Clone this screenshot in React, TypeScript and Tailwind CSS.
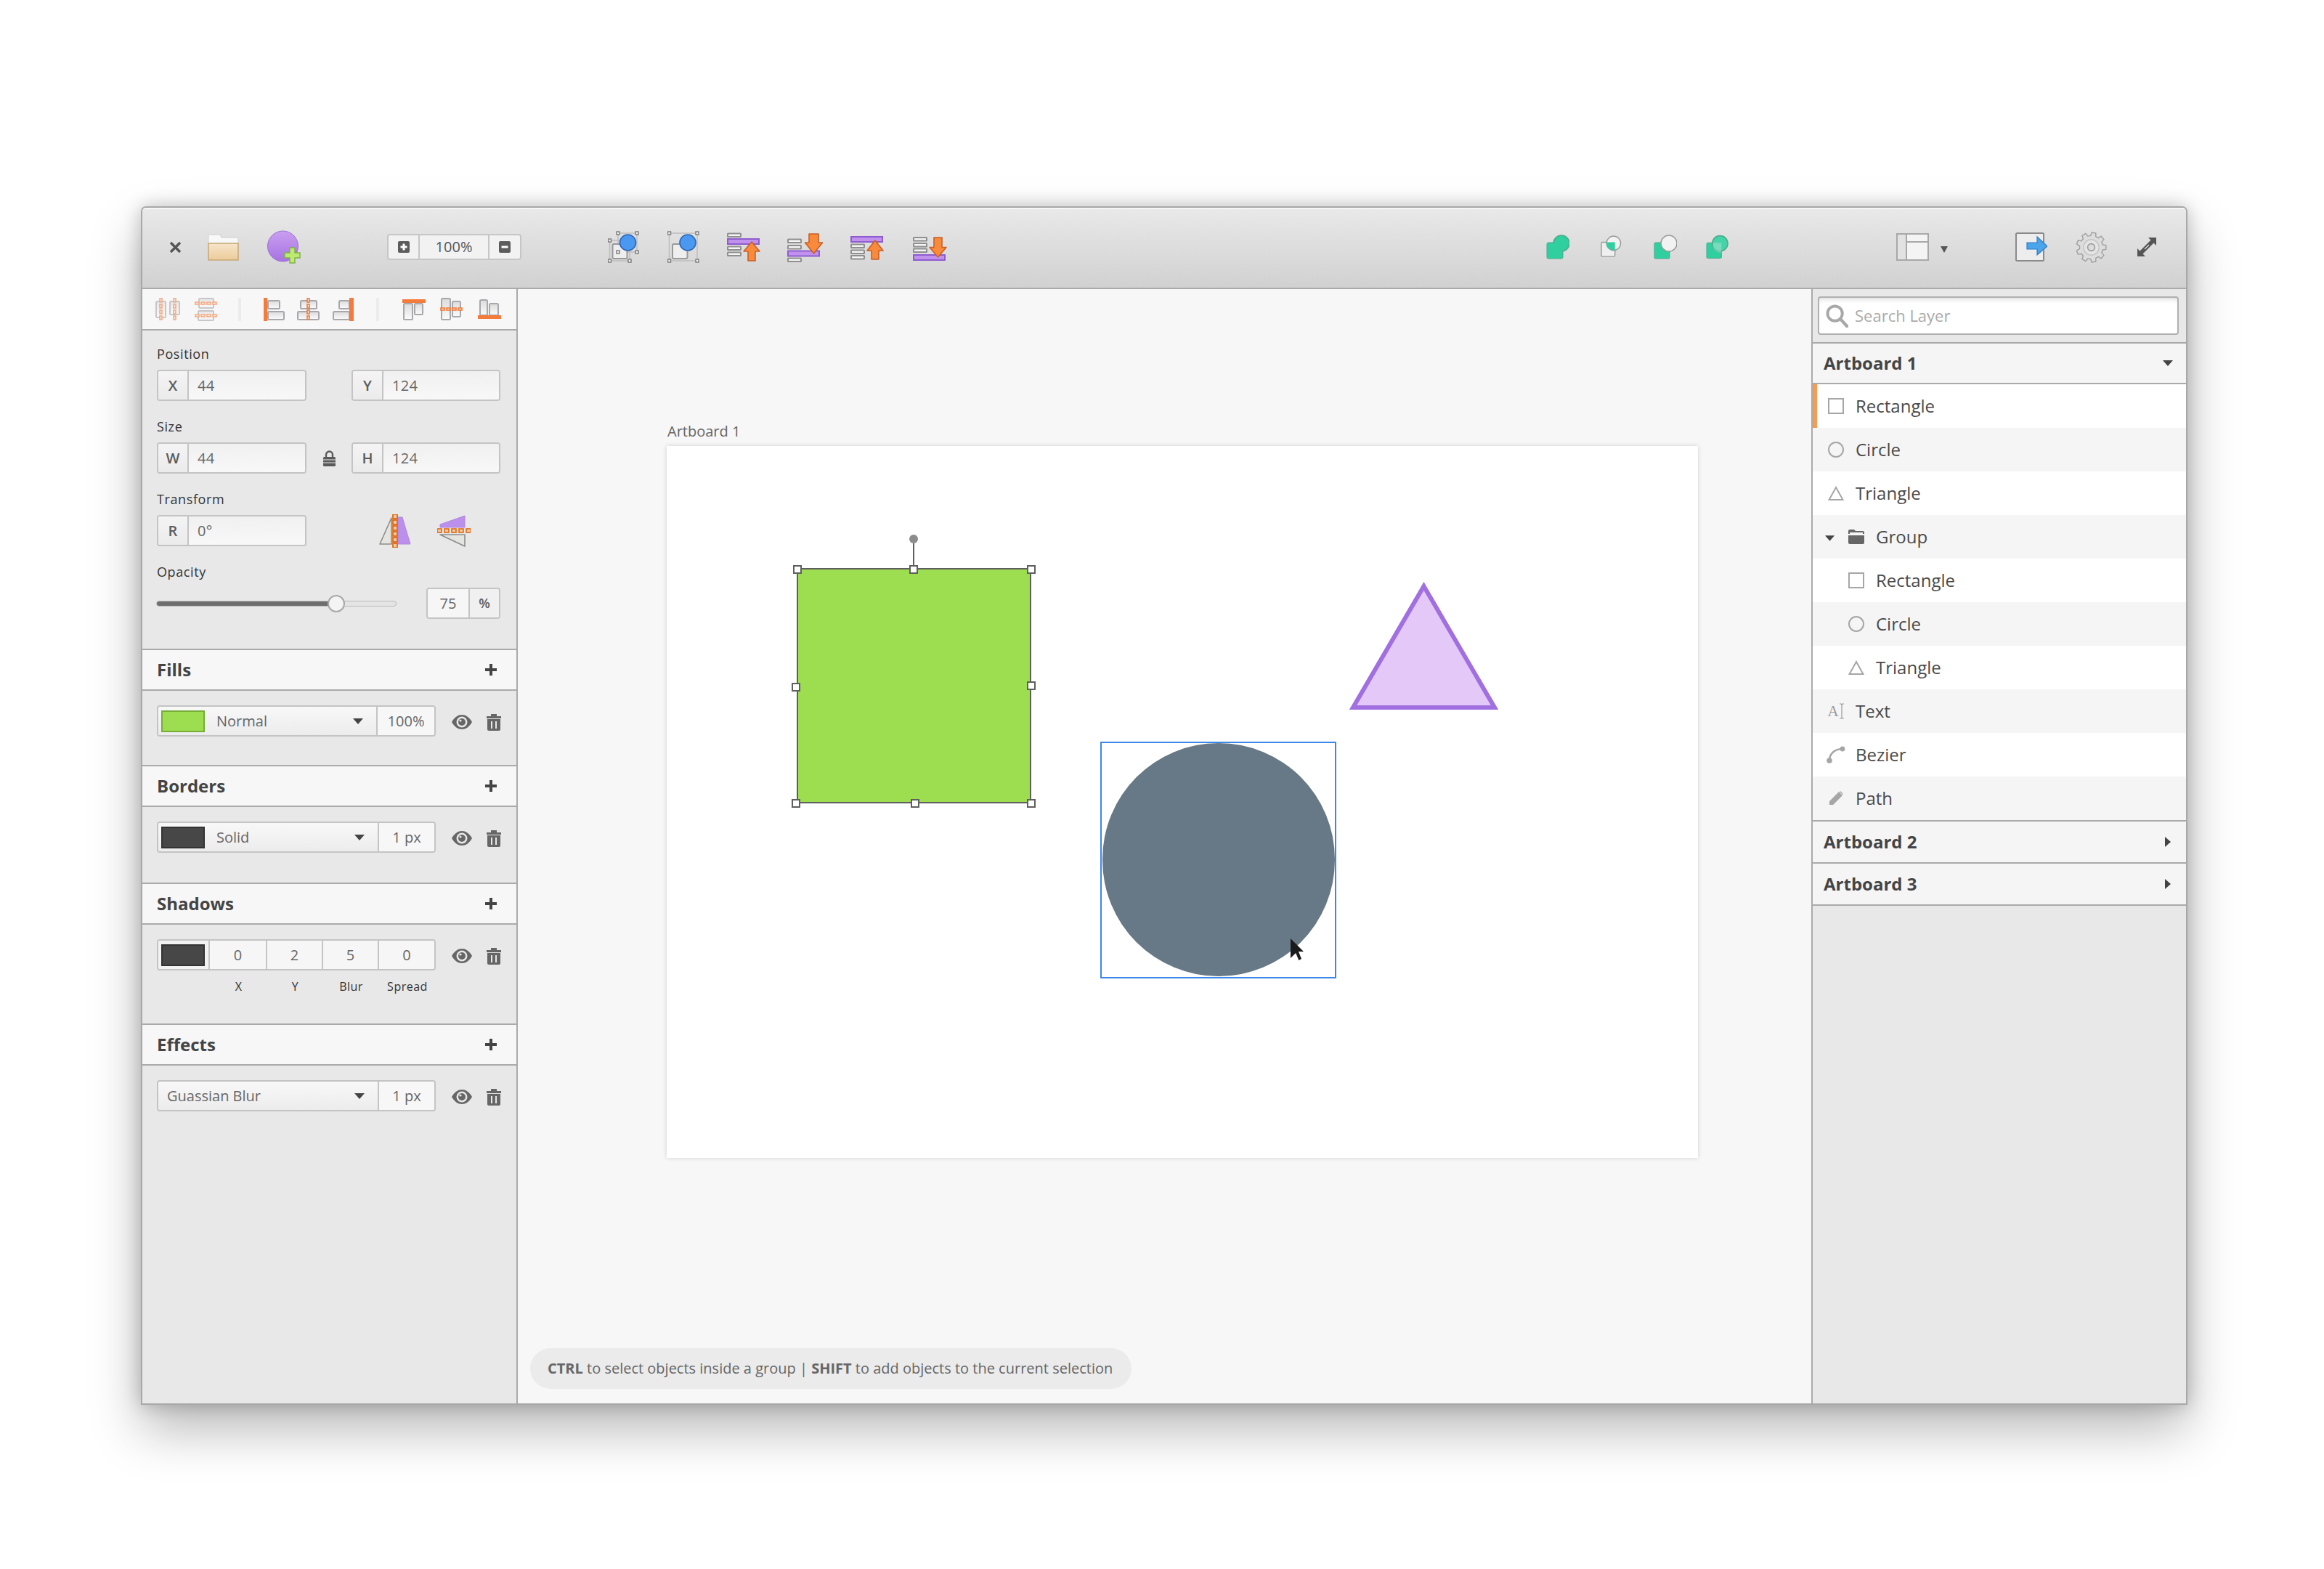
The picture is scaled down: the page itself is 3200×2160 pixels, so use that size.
import type { ReactNode } from "react"

const line = "border-[#aaaaaa]"

function Plus() {
  return (
    <svg viewBox="0 0 16 16" className="w-[16px] h-[16px]">
      <path d="M6 0h4v6h6v4h-6v6H6v-6H0V6h6z" fill="#444444" />
    </svg>
  )
}

function Caret({ className = "" }: { className?: string }) {
  return (
    <svg viewBox="0 0 14 8" className={`w-[14px] h-[8px] shrink-0 ${className}`}>
      <path d="M0 0h14L7 8z" fill="#444444" />
    </svg>
  )
}

function Eye() {
  return (
    <svg viewBox="0 0 28 20" className="w-[28px] h-[20px] shrink-0">
      <path d="M0 10C4 3 9 0 14 0s10 3 14 10c-4 7-9 10-14 10S4 17 0 10z" fill="#666666" />
      <circle cx="14" cy="10" r="7.5" fill="#e8e8e8" />
      <circle cx="14" cy="10" r="5" fill="#666666" />
      <circle cx="12" cy="8" r="1.6" fill="#e8e8e8" />
    </svg>
  )
}

function Trash() {
  return (
    <svg viewBox="0 0 20 23" className="w-[20px] h-[23px] shrink-0">
      <path d="M0 3h6V0h8v3h6v3H0z" fill="#666666" />
      <path d="M1 7h18v14a2 2 0 0 1-2 2H3a2 2 0 0 1-2-2z" fill="#666666" />
      <path d="M6 10h2v10H6zM12 10h2v10h-2z" fill="#e8e8e8" />
    </svg>
  )
}

function RowActions() {
  return (
    <div className="flex items-center ml-[22px] mt-[3px] gap-[20px]">
      <Eye />
      <Trash />
    </div>
  )
}

function Field({ label, value, w }: { label: string; value: string; w: string }) {
  return (
    <div className={`flex h-[43px] rounded-[4px] border-2 border-[#c4c4c4] overflow-hidden ${w}`}>
      <div className="w-[42px] flex items-center justify-center border-r-2 border-[#c4c4c4] bg-gradient-to-b from-[#f4f4f4] to-[#ebebeb] text-[20px] font-semibold text-[#5c5c5c]">
        {label}
      </div>
      <div className="flex-1 flex items-center pl-[12px] bg-gradient-to-b from-[#f0f0f0] to-[#f8f8f8] text-[20px] tracking-[0.3px] text-[#666666]">
        {value}
      </div>
    </div>
  )
}

function Label({ children, className = "" }: { children: ReactNode; className?: string }) {
  return <div className={`h-[24px] leading-[24px] text-[18px] tracking-[0.6px] text-[#333333] ${className}`}>{children}</div>
}

function SectionHead({ title }: { title: string }) {
  return (
    <div className={`h-[58px] flex items-center justify-between bg-[#f7f7f7] border-y-2 ${line} pl-[20px] pr-[27px]`}>
      <span className="text-[24px] font-bold text-[#444444]">{title}</span>
      <Plus />
    </div>
  )
}

function Swatch({ className }: { className: string }) {
  return <div className={`w-[60px] h-[30px] border-2 ${className}`} />
}

function Dropdown({ swatch, text, value, split }: { swatch?: string; text: string; value: string; split: string }) {
  return (
    <div className="flex h-[43px] w-[384px] rounded-[4px] border-2 border-[#c4c4c4] overflow-hidden">
      <div className={`flex items-center bg-gradient-to-b from-[#f8f8f8] to-[#ececec] border-r-2 border-[#c4c4c4] pr-[18px] ${split}`}>
        {swatch ? <div className="ml-[4px]"><Swatch className={swatch} /></div> : null}
        <span className={`text-[20px] text-[#666666] flex-1 ${swatch ? "ml-[16px]" : "ml-[12px]"}`}>{text}</span>
        <Caret />
      </div>
      <div className="flex-1 flex items-center justify-center bg-[#f7f7f7] text-[20px] text-[#666666]">{value}</div>
    </div>
  )
}

function Dashes({ x, y, vertical, count = 4 }: { x: number; y: number; vertical?: boolean; count?: number }) {
  const steps = Array.from({ length: count }, (_, i) => i * 8)
  return (
    <>
      {steps.map((p) =>
        vertical ? (
          <rect key={p} x={x + 1} y={y + p + 1} width={3} height={5} fill="#e6e6e6" stroke="#f47b3a" strokeWidth="1.6" />
        ) : (
          <rect key={p} x={x + p + 1} y={y + 1} width={5} height={3} fill="#e6e6e6" stroke="#f47b3a" strokeWidth="1.6" />
        ),
      )}
    </>
  )
}

function AlignIcon({
  className,
  rects,
  bar,
  dashed,
  vertical,
}: {
  className: string
  rects: number[][]
  bar: number[]
  dashed?: boolean
  vertical?: boolean
}) {
  return (
    <svg viewBox="0 0 32 32" className={`h-[32px] w-[32px] shrink-0 ${className}`}>
      {rects.map((r, i) => (
        <rect key={i} x={r[0] + 1} y={r[1] + 1} width={r[2] - 2} height={r[3] - 2} rx="1.5" fill="url(#toolRect)" stroke="#a8a8ac" strokeWidth="2" />
      ))}
      {dashed ? (
        <Dashes x={bar[0]} y={bar[1]} vertical={vertical} />
      ) : (
        <rect x={bar[0]} y={bar[1]} width={bar[2]} height={bar[3]} fill="#f47b3a" />
      )}
    </svg>
  )
}

function OrderIcon({
  className,
  bars,
  accent,
  arrow,
}: {
  className: string
  bars: number[]
  accent: number
  arrow: string
}) {
  return (
    <svg viewBox="0 0 49 41" className={`w-[49px] h-[41px] shrink-0 ${className}`}>
      {bars.map((y) => (
        <rect key={y} x="1" y={y} width="18" height="4.5" rx="0.5" fill="#f4f4f4" stroke="#8f8f8f" strokeWidth="2" />
      ))}
      <rect x="1" y={accent} width="43" height="7" fill="#c092ee" stroke="#8f5cd0" strokeWidth="2" />
      <path d={arrow} fill="#f98a3c" stroke="#c95f27" strokeWidth="1.6" strokeLinejoin="round" />
    </svg>
  )
}

function Ellipse({ fill, stroke = "none", cx = 21 }: { fill: string; stroke?: string; cx?: number }) {
  return <circle cx={cx} cy="12" r="11" fill={fill} stroke={stroke} strokeWidth="1.5" />
}

function gearPath(cx: number, cy: number, outer: number, inner: number, teeth: number) {
  const pts: string[] = []
  for (let i = 0; i < teeth; i++) {
    const a = (i / teeth) * Math.PI * 2
    const s = (Math.PI * 2) / teeth
    const at = (r: number, t: number) => `${(cx + r * Math.cos(t)).toFixed(2)} ${(cy + r * Math.sin(t)).toFixed(2)}`
    pts.push(at(inner, a - s * 0.32), at(outer, a - s * 0.2), at(outer, a + s * 0.2), at(inner, a + s * 0.32))
  }
  return `M${pts.join("L")}Z`
}

function Toolbar() {
  return (
    <div className={`h-[112px] flex items-center pb-[2px] shrink-0 border-b-2 ${line} bg-gradient-to-b from-[#e9e9e9] to-[#d1d1d1] shadow-[inset_0_2px_0_#f6f6f6]`}>
      <svg viewBox="0 0 17 17" className="ml-[37px] w-[17px] h-[17px] shrink-0">
        <path d="M2 2l13 13M15 2L2 15" stroke="#555555" strokeWidth="3.4" />
      </svg>
      <svg viewBox="0 0 43 37" className="ml-[36px] w-[43px] h-[37px] shrink-0">
        <defs>
          <linearGradient id="folderBody" x1="0" y1="0" x2="0" y2="1">
            <stop offset="0" stopColor="#f6e5cb" />
            <stop offset="1" stopColor="#eccb99" />
          </linearGradient>
          <linearGradient id="purple" x1="0" y1="0" x2="0" y2="1">
            <stop offset="0" stopColor="#ca9ff0" />
            <stop offset="1" stopColor="#a672e2" />
          </linearGradient>
          <linearGradient id="toolRect" x1="0" y1="0" x2="0" y2="1">
            <stop offset="0" stopColor="#dcdcdc" />
            <stop offset="1" stopColor="#fbfbfb" />
          </linearGradient>
        </defs>
        <path d="M1 5V2a1 1 0 0 1 1-1h15l2 4h22a1 1 0 0 1 1 1v8H1z" fill="#f8f8f8" stroke="#cfcfcf" />
        <rect x="1" y="13" width="41" height="23" fill="url(#folderBody)" stroke="#c9ab7c" strokeWidth="1.6" />
      </svg>
      <svg viewBox="0 0 46 46" className="ml-[39px] w-[46px] h-[46px] shrink-0">
        <circle cx="21.5" cy="22" r="21" fill="url(#purple)" stroke="#9a70d4" strokeWidth="1" />
        <path d="M31 24h7v7h7v7h-7v7h-7v-7h-7v-7h7z" fill="#bdeb6f" stroke="#7eb04e" strokeWidth="1.4" />
      </svg>
      <div className="ml-[119px] flex h-[36px] w-[185px] shrink-0 rounded-[4px] border-2 border-[#c6c6c6] bg-[#f2f2f2] overflow-hidden">
        <div className="w-[43px] flex items-center justify-center border-r-2 border-[#c6c6c6]">
          <svg viewBox="0 0 16 16" className="w-[16px] h-[16px]">
            <rect width="16" height="16" rx="2" fill="#5c5c5c" />
            <path d="M6.5 3.5h3v3h3v3h-3v3h-3v-3h-3v-3h3z" fill="#ffffff" />
          </svg>
        </div>
        <div className="flex-1 flex items-center justify-center text-[20px] text-[#555555]">100%</div>
        <div className="w-[44px] flex items-center justify-center border-l-2 border-[#c6c6c6]">
          <svg viewBox="0 0 16 16" className="w-[16px] h-[16px]">
            <rect width="16" height="16" rx="2" fill="#5c5c5c" />
            <path d="M3.5 6.5h9v3h-9z" fill="#ffffff" />
          </svg>
        </div>
      </div>

      <svg viewBox="0 0 44 44" className="ml-[119px] w-[44px] h-[44px] shrink-0">
        <rect x="2.5" y="13" width="27.5" height="28" fill="none" stroke="#bdbdbd" strokeWidth="1.5" />
        <rect x="14" y="3" width="26" height="26" fill="none" stroke="#bdbdbd" strokeWidth="1.5" />
        <rect x="6.5" y="18" width="20" height="20" rx="2" fill="#eeeeee" stroke="#999999" strokeWidth="2" />
        {[[14, 3], [40, 3], [2.5, 13], [14, 29], [40, 29], [2.5, 41], [30, 41]].map(([x, y]) => (
          <rect key={`${x}-${y}`} x={x - 2} y={y - 2} width="4" height="4" fill="#f4f4f4" stroke="#808080" strokeWidth="1.5" />
        ))}
        <circle cx="27.5" cy="16" r="11" fill="#4a98ef" stroke="#2d67b8" strokeWidth="1.6" />
      </svg>
      <svg viewBox="0 0 44 44" className="ml-[38px] w-[44px] h-[44px] shrink-0">
        <rect x="2.5" y="3" width="38.5" height="38" fill="none" stroke="#bdbdbd" strokeWidth="1.5" />
        <rect x="7" y="18" width="20.5" height="20" rx="2" fill="#eeeeee" stroke="#999999" strokeWidth="2" />
        {[[2.5, 3], [41, 3], [2.5, 41], [41, 41]].map(([x, y]) => (
          <rect key={`${x}-${y}`} x={x - 2} y={y - 2} width="4" height="4" fill="#f4f4f4" stroke="#808080" strokeWidth="1.5" />
        ))}
        <circle cx="28" cy="16" r="11" fill="#4a98ef" stroke="#2d67b8" strokeWidth="1.6" />
      </svg>
      <OrderIcon className="ml-[38px]" bars={[1.5, 19.5, 27.5]} accent={9} arrow="M34 13l11 13h-6v13H29V26h-6z" />
      <OrderIcon className="ml-[34px]" bars={[9.5, 18, 35.5]} accent={25.5} arrow="M30 2h13v12h5.5L36.5 29 24.5 14H30z" />
      <OrderIcon className="ml-[38px]" bars={[16.5, 24.5, 32]} accent={6} arrow="M34 11l11 14h-6v12H29V25h-6z" />
      <OrderIcon className="ml-[37px]" bars={[7, 15, 22.5]} accent={31} arrow="M29 7h11v13.5h6L34.5 34 23 20.5h6z" />

      <svg viewBox="0 0 32 34" className="ml-[823px] w-[32px] h-[34px] shrink-0">
        <rect x="1" y="11" width="22" height="22" rx="2" fill="#2fcf9f" stroke="#4ca98a" />
        <Ellipse fill="#2fcf9f" stroke="#4ca98a" />
        <rect x="2" y="12" width="20" height="20" rx="2" fill="#2fcf9f" />
      </svg>
      <svg viewBox="0 0 32 34" className="ml-[43px] w-[30px] h-[34px] shrink-0">
        <defs>
          <clipPath id="boolCircle">
            <circle cx="19" cy="11.5" r="10.5" />
          </clipPath>
        </defs>
        <rect x="1" y="10" width="20" height="21" rx="1.5" fill="#efefef" stroke="#999999" strokeWidth="1.5" />
        <circle cx="19" cy="11.5" r="10.5" fill="#f2f2f2" stroke="#999999" strokeWidth="1.5" />
        <rect x="1" y="10" width="20" height="21" fill="#2fcf9f" clipPath="url(#boolCircle)" />
      </svg>
      <svg viewBox="0 0 32 34" className="ml-[43px] w-[32px] h-[34px] shrink-0">
        <rect x="1" y="11" width="21" height="22" rx="1.5" fill="#2fcf9f" stroke="#4ca98a" />
        <Ellipse fill="#f2f2f2" stroke="#999999" />
      </svg>
      <svg viewBox="0 0 32 34" className="ml-[40px] w-[31px] h-[34px] shrink-0">
        <rect x="1" y="11" width="21" height="22" rx="1.5" fill="#2fcf9f" stroke="#4ca98a" />
        <circle cx="20" cy="12" r="11" fill="#45d4a9" stroke="#4ca98a" strokeWidth="1.5" />
        <path d="M10 11h12v14A11 11 0 0 1 10 17z" fill="#d8e8e0" opacity="0.35" />
      </svg>

      <svg viewBox="0 0 45 38" className="ml-[231px] w-[45px] h-[38px] shrink-0">
        <rect x="1" y="1" width="43" height="36" fill="#f4f4f4" stroke="#a8a8a8" strokeWidth="2" />
        <path d="M14 1v36M14 12h30" stroke="#a8a8a8" strokeWidth="2" />
        <rect x="2" y="2" width="11" height="34" fill="#e2e2e2" />
      </svg>
      <svg viewBox="0 0 10 9" className="ml-[16px] mt-[6px] w-[10px] h-[9px] shrink-0">
        <path d="M0 0h10L5 9z" fill="#555555" />
      </svg>
      <svg viewBox="0 0 44 40" className="ml-[93px] w-[44px] h-[40px] shrink-0">
        <rect x="1" y="1" width="38" height="38" rx="1.5" fill="#ededed" stroke="#8a8a8a" strokeWidth="2" />
        <path d="M16 14h14V6l14 13-14 12v-8H16z" fill="#4aa5ea" stroke="#2f7cc4" strokeWidth="1.2" />
      </svg>
      <svg viewBox="0 0 44 44" className="ml-[39px] w-[43px] h-[43px] shrink-0">
        <path d={gearPath(22, 22, 21, 16.5, 9)} fill="#dddddd" stroke="#a0a0a0" strokeWidth="1.5" strokeLinejoin="round" />
        <circle cx="22" cy="22" r="11" fill="#e4e4e4" stroke="#c4c4c4" strokeWidth="1.5" />
        <circle cx="22" cy="22" r="5" fill="#dcdcdc" stroke="#9a9a9a" strokeWidth="1.6" />
      </svg>
      <svg viewBox="0 0 26 26" className="ml-[42px] w-[26px] h-[26px] shrink-0">
        <path d="M15 0h11v11l-3.5-3.5L7.5 22.5 11 26H0V15l3.5 3.5 15-15z" fill="#555555" />
        <path d="M10 16l6-6" stroke="#e0e0e0" strokeWidth="1.2" />
      </svg>
    </div>
  )
}

function AlignRow() {
  return (
    <div className={`h-[57px] shrink-0 flex items-center pl-[18px] bg-[#f7f7f7] border-b-2 ${line}`}>
      <svg viewBox="0 0 34 32" className="w-[34px] h-[32px] shrink-0 opacity-60">
        <rect x="1" y="5" width="13" height="22" rx="1.5" fill="url(#toolRect)" stroke="#a8a8ac" strokeWidth="2" />
        <rect x="20" y="5" width="13" height="18" rx="1.5" fill="url(#toolRect)" stroke="#a8a8ac" strokeWidth="2" />
        <Dashes x={5} y={0} vertical />
        <Dashes x={24} y={0} vertical />
      </svg>
      <svg viewBox="0 0 32 32" className="ml-[20px] w-[32px] h-[32px] shrink-0 opacity-60">
        <rect x="6" y="1" width="20" height="13" rx="1.5" fill="url(#toolRect)" stroke="#a8a8ac" strokeWidth="2" />
        <rect x="5" y="18" width="21" height="13" rx="1.5" fill="url(#toolRect)" stroke="#a8a8ac" strokeWidth="2" />
        <Dashes x={0} y={5} />
        <Dashes x={0} y={22} />
      </svg>
      <div className="ml-[28px] w-[4px] h-[32px] bg-[#ececec]" />
      <AlignIcon className="ml-[31px]" rects={[[5, 3, 18, 13], [5, 18, 24, 13]]} bar={[0, 0, 5, 32]} />
      <AlignIcon className="ml-[14px]" rects={[[4, 3, 24, 13], [0, 18, 31, 13]]} bar={[13, 0, 5, 32]} dashed vertical />
      <AlignIcon className="ml-[17px]" rects={[[8, 3, 16, 13], [0, 18, 24, 13]]} bar={[23, 0, 6, 32]} />
      <div className="ml-[28px] w-[4px] h-[32px] bg-[#ececec]" />
      <AlignIcon className="ml-[32px]" rects={[[1, 7, 14, 24], [16, 7, 13, 17]]} bar={[0, 2, 32, 5]} />
      <AlignIcon className="ml-[20px]" rects={[[1, 0, 14, 31], [16, 4, 13, 23]]} bar={[0, 13, 32, 5]} dashed />
      <AlignIcon className="ml-[20px]" rects={[[2, 2, 12, 23], [15, 7, 14, 18]]} bar={[0, 24, 32, 5]} />
    </div>
  )
}

function LeftPanel() {
  return (
    <div className={`w-[517px] shrink-0 flex flex-col bg-[#e8e8e8] border-r-2 ${line}`}>
      <AlignRow />
      <div className="h-[438px] shrink-0 pl-[20px] pt-[20px]">
        <Label className="mb-[10px]">Position</Label>
        <div className="flex w-[473px] justify-between">
          <Field label="X" value="44" w="w-[206px]" />
          <Field label="Y" value="124" w="w-[205px]" />
        </div>
        <Label className="mt-[23px] mb-[10px]">Size</Label>
        <div className="flex w-[473px] justify-between items-center">
          <Field label="W" value="44" w="w-[206px]" />
          <svg viewBox="0 0 17 22" className="w-[17px] h-[22px]">
            <path d="M4 10V6a4.5 4.5 0 0 1 9 0v4" fill="none" stroke="#5a5a5a" strokeWidth="2.4" />
            <rect x="0" y="9" width="17" height="13" rx="1.5" fill="#5a5a5a" />
            <path d="M0 13h17M0 17h17" stroke="#e8e8e8" strokeWidth="1" />
          </svg>
          <Field label="H" value="124" w="w-[205px]" />
        </div>
        <Label className="mt-[23px] mb-[10px]">Transform</Label>
        <div className="flex items-center h-[43px]">
          <Field label="R" value="0°" w="w-[206px]" />
          <svg viewBox="0 0 44 46" className="ml-[100px] w-[44px] h-[46px] shrink-0">
            <path d="M17 5v36H1z" fill="#e4e4e0" stroke="#8c8c88" strokeWidth="1.6" strokeLinejoin="round" />
            <path d="M26 4h6l11 37H26z" fill="#bb90ea" stroke="#b184e4" strokeWidth="1" strokeLinejoin="round" />
            {[0, 8, 16, 24, 32, 40].map((y) => (
              <rect key={y} x="19" y={y} width="6" height="6" fill="#f0c9a4" stroke="#e06a10" strokeWidth="1.8" />
            ))}
          </svg>
          <svg viewBox="0 0 46 44" className="ml-[36px] w-[46px] h-[44px] shrink-0">
            <path d="M38 1v16H4v-4z" fill="#bb90ea" stroke="#b184e4" strokeWidth="1" strokeLinejoin="round" />
            <path d="M4 27h34v16z" fill="#e4e4e0" stroke="#8c8c88" strokeWidth="1.6" strokeLinejoin="round" />
            {[0, 10, 20, 30, 40].map((x) => (
              <rect key={x} x={x} y="19" width="6" height="5" fill="#f0c9a4" stroke="#e06a10" strokeWidth="1.6" />
            ))}
          </svg>
        </div>
        <Label className="mt-[23px] mb-[10px]">Opacity</Label>
        <div className="flex items-center">
          <div className="relative -ml-[1px] w-[331px] h-[8px] rounded-full bg-[#e4e4e4] border border-[#bbbbbb]">
            <div className="h-full w-[240px] rounded-full bg-[#6e6e6e]" />
            <div className="absolute left-[235px] -top-[9px] w-[24px] h-[24px] rounded-full border-2 border-[#a8a8a8] bg-[#f4f4f4]" />
          </div>
          <div className="ml-[41px] flex h-[43px] w-[102px] rounded-[4px] border-2 border-[#c4c4c4] overflow-hidden">
            <div className="w-[58px] flex items-center justify-center bg-[#f6f6f6] border-r-2 border-[#c4c4c4] text-[20px] text-[#666666]">75</div>
            <div className="flex-1 flex items-center justify-center bg-[#f0f0f0] text-[18px] font-semibold text-[#5c5c5c]">%</div>
          </div>
        </div>
      </div>

      <SectionHead title="Fills" />
      <div className="h-[102px] shrink-0 pt-[20px] pl-[20px] flex items-start">
        <Dropdown swatch="bg-[#9ddd50] border-[#78ad3a]" text="Normal" value="100%" split="w-[302px]" />
        <div className="h-[43px] flex items-center"><RowActions /></div>
      </div>
      <SectionHead title="Borders" />
      <div className="h-[104px] shrink-0 pt-[20px] pl-[20px] flex items-start">
        <Dropdown swatch="bg-[#474747] border-[#333333]" text="Solid" value="1 px" split="w-[304px]" />
        <div className="h-[43px] flex items-center"><RowActions /></div>
      </div>
      <SectionHead title="Shadows" />
      <div className="h-[136px] shrink-0 pt-[20px] pl-[20px]">
        <div className="flex items-start">
          <div className="flex h-[43px] w-[384px] rounded-[4px] border-2 border-[#c4c4c4] overflow-hidden text-[20px] text-[#666666]">
            <div className="w-[71px] flex items-center pl-[4px] bg-[#f2f2f2] border-r-2 border-[#c4c4c4]">
              <Swatch className="bg-[#474747] border-[#333333]" />
            </div>
            <div className="w-[79px] flex items-center justify-center bg-[#f6f6f6] border-r-2 border-[#c4c4c4]">0</div>
            <div className="w-[77px] flex items-center justify-center bg-[#f6f6f6] border-r-2 border-[#c4c4c4]">2</div>
            <div className="w-[77px] flex items-center justify-center bg-[#f6f6f6] border-r-2 border-[#c4c4c4]">5</div>
            <div className="flex-1 flex items-center justify-center bg-[#f6f6f6]">0</div>
          </div>
          <div className="h-[43px] flex items-center"><RowActions /></div>
        </div>
        <div className="flex mt-[10px] ml-[73px] text-[16px] tracking-[0.5px] text-[#333333] text-center">
          <span className="w-[79px]">X</span>
          <span className="w-[77px]">Y</span>
          <span className="w-[77px]">Blur</span>
          <span className="w-[78px]">Spread</span>
        </div>
      </div>
      <SectionHead title="Effects" />
      <div className="pt-[20px] pl-[20px] flex items-start">
        <Dropdown text="Guassian Blur" value="1 px" split="w-[304px]" />
        <div className="h-[43px] flex items-center"><RowActions /></div>
      </div>
    </div>
  )
}

function Handle({ className }: { className: string }) {
  return <div className={`absolute w-[12px] h-[12px] bg-white border-2 border-[#5f5f5f] ${className}`} />
}

function Canvas() {
  return (
    <div className="relative flex-1 bg-[#f7f7f7] pl-[205px] pt-[184px]">
      <div className="h-[24px] leading-[24px] pl-[1px] mb-[8px] text-[20px] text-[#666666]">Artboard 1</div>
      <div className="relative w-[1420px] h-[980px] bg-white shadow-[0_0_6px_rgba(0,0,0,0.16)]">
        <div className="absolute left-[179px] top-[168px] w-[323px] h-[324px] bg-[#9ddd50] border-2 border-[#5f5f5f]" />
        <div className="absolute left-[339px] top-[134px] w-[2px] h-[32px] bg-[#5f5f5f]" />
        <div className="absolute left-[334px] top-[122px] w-[12px] h-[12px] rounded-full bg-[#8c8c8c]" />
        <Handle className="left-[174px] top-[164px]" />
        <Handle className="left-[334px] top-[164px]" />
        <Handle className="left-[496px] top-[164px]" />
        <Handle className="left-[172px] top-[326px]" />
        <Handle className="left-[496px] top-[324px]" />
        <Handle className="left-[172px] top-[486px]" />
        <Handle className="left-[336px] top-[486px]" />
        <Handle className="left-[496px] top-[486px]" />

        <svg viewBox="0 0 210 182" className="absolute left-[937px] top-[184px] w-[210px] h-[182px]">
          <path d="M105.5 9L203 176H8z" fill="#e3c8f8" stroke="#a06fe0" strokeWidth="6" />
        </svg>

        <div className="absolute left-[597px] top-[407px] w-[325px] h-[326px] border-2 border-[#3b88e8]" />
        <div className="absolute left-[600px] top-[409px] w-[320px] h-[321px] rounded-full bg-[#677886]" />
        <svg viewBox="0 0 20 32" className="absolute left-[859px] top-[678px] w-[20px] h-[32px]">
          <path d="M0 0l18 18h-7l4 10-3.6 2-4.2-10L0 27z" fill="#1a1a1a" />
        </svg>
      </div>
      <div className="absolute left-[17px] bottom-[20px] h-[56px] w-[828px] rounded-[28px] bg-[#ebebeb] flex items-center pl-[24px] text-[20px] text-[#666666]">
        <span>
          <b className="font-bold">CTRL</b> to select objects inside a group | <b className="font-bold">SHIFT</b> to add objects to the current selection
        </span>
      </div>
    </div>
  )
}

function BoardHead({ title, open, first }: { title: string; open?: boolean; first?: boolean }) {
  return (
    <div className={`h-[58px] flex items-center justify-between pl-[15px] pr-[18px] bg-[#f5f5f5] border-b-2 ${line} ${first ? `border-t-2` : ""}`}>
      <span className="text-[24px] font-bold text-[#444444]">{title}</span>
      {open ? (
        <Caret />
      ) : (
        <svg viewBox="0 0 8 14" className="w-[8px] h-[14px] mr-[3px]">
          <path d="M0 0l8 7-8 7z" fill="#444444" />
        </svg>
      )}
    </div>
  )
}

function RectIco() {
  return (
    <svg viewBox="0 0 22 22" className="w-[22px] h-[22px] shrink-0">
      <rect x="1" y="1" width="20" height="20" fill="none" stroke="#a6a6a6" strokeWidth="2" />
    </svg>
  )
}
function CircleIco() {
  return (
    <svg viewBox="0 0 22 22" className="w-[22px] h-[22px] shrink-0">
      <circle cx="11" cy="11" r="10" fill="none" stroke="#a6a6a6" strokeWidth="2" />
    </svg>
  )
}
function TriIco() {
  return (
    <svg viewBox="0 0 22 20" className="w-[22px] h-[20px] shrink-0">
      <path d="M11 2l9.5 17h-19z" fill="none" stroke="#a6a6a6" strokeWidth="2" />
    </svg>
  )
}

function LayerRow({
  name,
  icon,
  odd,
  depth,
  active,
  arrow,
}: {
  name: string
  icon: ReactNode
  odd: boolean
  depth?: boolean
  active?: boolean
  arrow?: boolean
}) {
  return (
    <div
      className={`relative h-[60px] flex items-center ${depth ? "pl-[49px]" : "pl-[21px]"} ${odd ? "bg-white" : "bg-[#f5f5f5]"}`}
    >
      {active ? <div className="absolute left-0 top-0 bottom-0 w-[6px] bg-[#f99b4f]" /> : null}
      {arrow ? (
        <svg viewBox="0 0 14 8" className="absolute left-[17px] top-[28px] w-[13px] h-[8px]">
          <path d="M0 0h14L7 8z" fill="#444444" />
        </svg>
      ) : null}
      <div className="w-[22px] flex items-center justify-center">{icon}</div>
      <span className="ml-[16px] text-[24px] text-[#4a4a4a]">{name}</span>
    </div>
  )
}

function RightPanel() {
  return (
    <div className={`w-[516px] shrink-0 flex flex-col bg-[#e8e8e8] border-l-2 ${line}`}>
      <div className="h-[73px] shrink-0 pl-[7px] pt-[10px]">
        <div className="w-[497px] h-[53px] rounded-[4px] border-2 border-[#b0b0b0] bg-white shadow-[inset_0_6px_6px_-4px_rgba(0,0,0,0.15)] flex items-center pl-[9px]">
          <svg viewBox="0 0 32 33" className="w-[31px] h-[32px] shrink-0">
            <circle cx="13" cy="13" r="10.5" fill="none" stroke="#a8a8a8" strokeWidth="4" />
            <path d="M21 21l9 10" stroke="#a8a8a8" strokeWidth="4.5" strokeLinecap="round" />
          </svg>
          <span className="ml-[9px] text-[22px] text-[#aaaaaa]">Search Layer</span>
        </div>
      </div>
      <BoardHead title="Artboard 1" open first />
      <LayerRow name="Rectangle" odd active icon={<RectIco />} />
      <LayerRow name="Circle" odd={false} icon={<CircleIco />} />
      <LayerRow name="Triangle" odd icon={<TriIco />} />
      <LayerRow
        name="Group"
        odd={false}
        depth
        arrow
        icon={
          <svg viewBox="0 0 22 20" className="w-[22px] h-[20px] shrink-0">
            <path d="M0 2a2 2 0 0 1 2-2h6l2 2h10a2 2 0 0 1 2 2v2H0z" fill="#666666" />
            <path d="M0 8h22v10a2 2 0 0 1-2 2H2a2 2 0 0 1-2-2z" fill="#666666" />
            <path d="M2 4h18v2H2z" fill="#f5f5f5" />
          </svg>
        }
      />
      <LayerRow name="Rectangle" odd depth icon={<RectIco />} />
      <LayerRow name="Circle" odd={false} depth icon={<CircleIco />} />
      <LayerRow name="Triangle" odd depth icon={<TriIco />} />
      <LayerRow
        name="Text"
        odd={false}
        icon={
          <span className="flex items-center">
            <span className="text-[21px] leading-none text-[#999999] font-['Liberation_Serif',serif]">A</span>
            <svg viewBox="0 0 8 22" className="w-[8px] h-[22px] shrink-0">
              <path d="M1 1h2l1 1 1-1h2M4 2v18M1 21h2l1-1 1 1h2" fill="none" stroke="#999999" strokeWidth="1.2" />
            </svg>
          </span>
        }
      />
      <LayerRow
        name="Bezier"
        odd
        icon={
          <svg viewBox="0 0 26 24" className="w-[26px] h-[24px] shrink-0">
            <path d="M4 20C4 10 12 4 22 4" fill="none" stroke="#a6a6a6" strokeWidth="2.4" />
            <circle cx="4" cy="20" r="3.8" fill="#a6a6a6" />
            <circle cx="22" cy="4" r="3.4" fill="#a6a6a6" />
          </svg>
        }
      />
      <LayerRow
        name="Path"
        odd={false}
        icon={
          <svg viewBox="0 0 20 20" className="w-[20px] h-[20px] shrink-0">
            <path d="M14 1l5 5L6 19H1v-5zM16 0l4 4-1 1-4-4z" fill="#a6a6a6" />
          </svg>
        }
      />
      <div className={`border-t-2 ${line}`} />
      <BoardHead title="Artboard 2" />
      <BoardHead title="Artboard 3" />
    </div>
  )
}

export default function App() {
  return (
    <div className="w-[3200px] h-[2160px] bg-white pt-[284px] pl-[194px] font-['Open_Sans',sans-serif] overflow-hidden">
      <div className="w-[2818px] h-[1650px] flex flex-col border-2 border-[#a8a8a8] rounded-t-[7px] shadow-[0_0_24px_rgba(0,0,0,0.22),0_34px_70px_rgba(0,0,0,0.28)] bg-[#e8e8e8]">
        <div className="rounded-t-[5px] overflow-hidden shrink-0">
          <Toolbar />
        </div>
        <div className="flex flex-1 min-h-0">
          <LeftPanel />
          <Canvas />
          <RightPanel />
        </div>
      </div>
    </div>
  )
}
